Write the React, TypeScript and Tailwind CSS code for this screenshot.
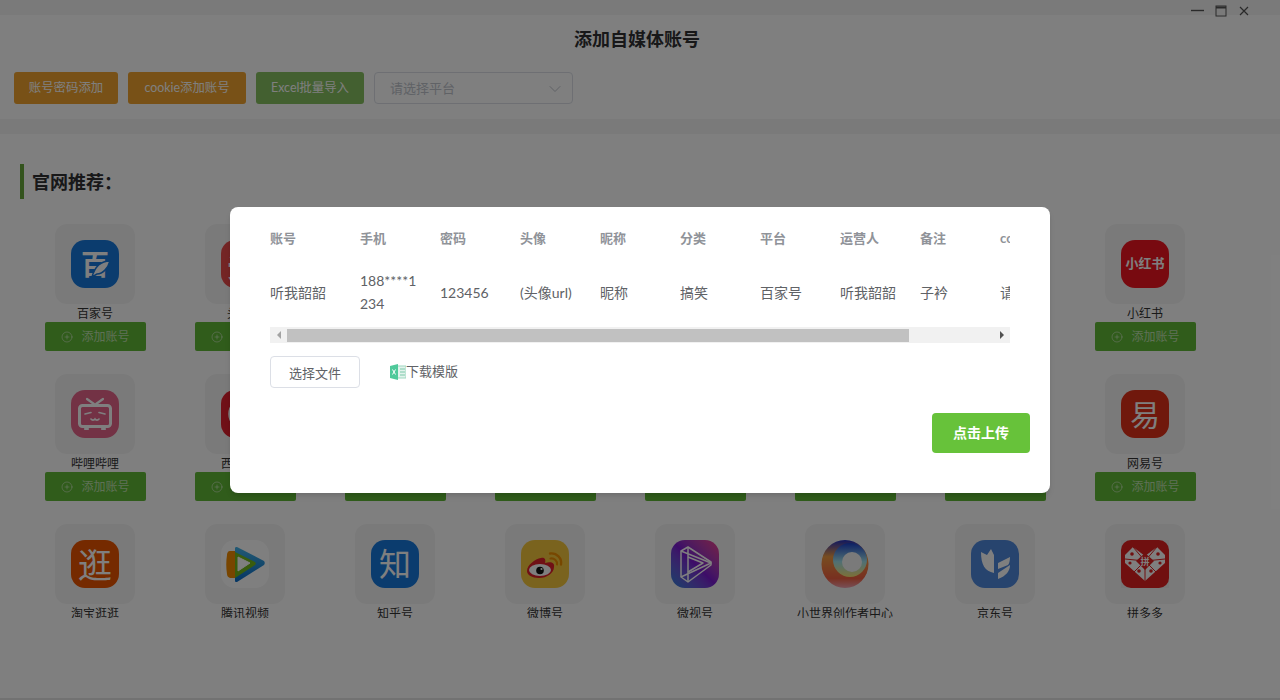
import { ChevronDown, CirclePlus } from 'lucide-react';
import type { ReactNode } from 'react';

const font = "[font-family:'Lato','Noto_Sans_CJK_SC',sans-serif]";

function LetterLogo({ bg, text, size }: { bg: string; text: string; size: string }) {
  return (
    <div className={`w-12 h-12 rounded-[14px] flex items-center justify-center text-white ${bg} ${size}`}>
      {text}
    </div>
  );
}

function Baijia() {
  return (
    <div className="relative w-12 h-12 rounded-[14px] bg-[#1678dc] flex items-center justify-center text-white text-[28px] font-bold">
      百
      <svg width="48" height="48" viewBox="0 0 48 48" className="absolute inset-0">
        <path d="M39 21C31 21 24 26 21 37l5-3c6 0 11-6 13-13z" fill="#fff" stroke="#1678dc" strokeWidth="1.5" />
      </svg>
    </div>
  );
}

function Xigua() {
  return (
    <div className="w-12 h-12 rounded-[14px] bg-[#e0202e]">
      <svg width="48" height="48" viewBox="0 0 48 48" fill="none">
        <circle cx="24" cy="24" r="15" stroke="#fff" strokeWidth="3.5" />
      </svg>
    </div>
  );
}

function Bilibili() {
  return (
    <div className="w-12 h-12 rounded-[14px] bg-[#e6648a]">
      <svg width="48" height="48" viewBox="0 0 48 48" fill="none" stroke="#fff" strokeLinecap="round">
        <path d="M16 9l7 5M32 9l-7 5" strokeWidth="2.2" />
        <rect x="8.5" y="15.5" width="31" height="21" rx="3" strokeWidth="3" />
        <path d="M14 24l6-1.5M28 22.5l6 1.5M20 29c1 1.5 3 1.5 4 0 1 1.5 3 1.5 4 0" strokeWidth="1.6" />
        <path d="M14 39h3M31 39h3" strokeWidth="2.2" />
      </svg>
    </div>
  );
}

function TencentVideo() {
  return (
    <div className="w-12 h-12 rounded-[14px] bg-white">
      <svg width="48" height="48" viewBox="0 0 48 48">
        <defs>
          <linearGradient id="txBlue" x1="0" y1="0" x2="0" y2="1">
            <stop offset="0" stopColor="#45b4e8" />
            <stop offset="1" stopColor="#0a6cc8" />
          </linearGradient>
        </defs>
        <path d="M9 11h6v27H9c-2-1-3-2-3-4-1-6-1-13 0-19 0-2 1-4 3-4z" fill="#f08a00" />
        <path d="M14 8c0-1 1-1 2-1l27 14c1 1 1 3 0 4L16 42c-1 0-2 0-2-1z" fill="url(#txBlue)" />
        <path d="M14 12l20 10c1 1 1 2 0 3L14 38z" fill="#72b81c" />
        <path d="M17 17l12 6-12 8z" fill="#fff" stroke="#fff" strokeLinejoin="round" />
      </svg>
    </div>
  );
}

function Weibo() {
  return (
    <div className="w-12 h-12 rounded-[14px] bg-[#f5c73d]">
      <svg width="48" height="48" viewBox="0 0 48 48" fill="none">
        <path d="M6 31c0-6 8-12 14-13 4-1 5 2 4 5 6-2 10 0 9 4 0 6-7 11-15 11-7 0-12-3-12-7z" fill="#e0202a" />
        <ellipse cx="19" cy="30" rx="11" ry="6" fill="#fff" />
        <circle cx="19" cy="30.5" r="3.8" fill="#111" />
        <circle cx="20.5" cy="29" r="1.1" fill="#fff" />
        <path d="M29 13.5c7-1 12 5 11 11" stroke="#ef8f00" strokeWidth="2.4" strokeLinecap="round" />
        <path d="M29.500 18.500c4-.5 7 2.500 6.500 6" stroke="#ef8f00" strokeWidth="2.2" strokeLinecap="round" />
      </svg>
    </div>
  );
}

function Weishi() {
  return (
    <div className="w-12 h-12 rounded-[14px] bg-gradient-to-tr from-[#1680d8] via-[#7a18d0] to-[#f03a8a]">
      <svg width="48" height="48" viewBox="0 0 48 48" fill="none" stroke="#fff" strokeWidth="1.5" strokeLinejoin="round">
        <path d="M10 11l7-4 23 15v3L17 42l-7-5z" />
        <path d="M17 7v35M10 11l30 12L10 37" />
        <path d="M17 17l15 6-15 9" />
      </svg>
    </div>
  );
}

function SmallWorld() {
  return (
    <svg width="48" height="48" viewBox="0 0 48 48">
      <defs>
        <linearGradient id="swOuter" x1="0" y1="0" x2="0" y2="1">
          <stop offset="0" stopColor="#2030c0" />
          <stop offset="0.35" stopColor="#f09a40" />
          <stop offset="0.8" stopColor="#f06040" />
          <stop offset="1" stopColor="#f0a0b0" />
        </linearGradient>
        <linearGradient id="swInner" x1="0" y1="0" x2="0" y2="1">
          <stop offset="0" stopColor="#1a40c8" />
          <stop offset="0.55" stopColor="#a0e0e8" />
          <stop offset="1" stopColor="#f8e070" />
        </linearGradient>
      </defs>
      <ellipse cx="24" cy="24" rx="23.500" ry="24" fill="url(#swOuter)" />
      <circle cx="29" cy="20" r="17" fill="url(#swInner)" />
      <circle cx="31" cy="22" r="10" fill="#f5f5f5" />
    </svg>
  );
}

function Jingdong() {
  return (
    <div className="w-12 h-12 rounded-[14px] bg-[#4f88dc]">
      <svg width="48" height="48" viewBox="0 0 48 48" fill="#fff">
        <path d="M10 12l6 3 4-6 3 6v18c-9-2-13-8-13-21z" />
        <path d="M27 23l12-6c0 4-1 7-2 8l-10 4zM27 33l12-8c0 6-4 11-12 14z" />
      </svg>
    </div>
  );
}

function Pinduoduo() {
  return (
    <div className="w-12 h-12 bg-[#ececec]">
      <div className="w-12 h-12 rounded-[10px] bg-[#e02020]">
        <svg width="48" height="48" viewBox="0 0 48 48">
          <path d="M12 7l12 9 12-9 8 8v8L24 41 4 23v-8z" fill="#fff" />
          <path d="M12 7l12 14M36 7L24 21M4 19l20 2M44 19l-20 2M12 33l12-12M36 33L24 21M24 41V21" stroke="#e02020" strokeWidth="1" />
          <path d="M24 13l9 8-9 9-9-9z" fill="#e02020" />
          <text x="24" y="25" textAnchor="middle" fontSize="9" fill="#fff" fontWeight="700">拼</text>
          <circle cx="11" cy="14" r="1.800" fill="#e02020" />
          <circle cx="37" cy="14" r="1.800" fill="#e02020" />
          <circle cx="9" cy="23" r="1.600" fill="#e02020" />
          <circle cx="39" cy="23" r="1.600" fill="#e02020" />
          <circle cx="18" cy="31" r="1.800" fill="#e02020" />
          <circle cx="30" cy="31" r="1.800" fill="#e02020" />
        </svg>
      </div>
    </div>
  );
}

type Tile = { name: string; logo: ReactNode; add?: boolean };

const tiles: Tile[] = [
  { name: '百家号', add: true, logo: <Baijia /> },
  { name: '头条号', add: true, logo: <LetterLogo bg="bg-[#e84a4a]" text="头" size="text-[36px] font-bold" /> },
  { name: '大鱼号', add: true, logo: <LetterLogo bg="bg-[#f08a00]" text="鱼" size="text-[30px] font-bold" /> },
  { name: '企鹅号', add: true, logo: <LetterLogo bg="bg-[#1678dc]" text="企" size="text-[30px] font-bold" /> },
  { name: '搜狐号', add: true, logo: <LetterLogo bg="bg-[#e6a23c]" text="搜" size="text-[30px] font-bold" /> },
  { name: '一点号', add: true, logo: <LetterLogo bg="bg-[#e84a4a]" text="点" size="text-[30px] font-bold" /> },
  { name: '抖音号', add: true, logo: <LetterLogo bg="bg-[#222222]" text="抖" size="text-[30px] font-bold" /> },
  { name: '小红书', add: true, logo: <LetterLogo bg="bg-[#f01420]" text="小红书" size="text-[13px] font-bold" /> },
  { name: '哔哩哔哩', add: true, logo: <Bilibili /> },
  { name: '西瓜视频', add: true, logo: <Xigua /> },
  { name: '快手号', add: true, logo: <LetterLogo bg="bg-[#f08a00]" text="快" size="text-[30px] font-bold" /> },
  { name: '趣头条', add: true, logo: <LetterLogo bg="bg-[#1ab060]" text="趣" size="text-[30px] font-bold" /> },
  { name: '简书', add: true, logo: <LetterLogo bg="bg-[#e8604a]" text="简" size="text-[30px] font-bold" /> },
  { name: '豆瓣', add: true, logo: <LetterLogo bg="bg-[#1ab060]" text="豆" size="text-[30px] font-bold" /> },
  { name: '美柚', add: true, logo: <LetterLogo bg="bg-[#f06a8a]" text="美" size="text-[30px] font-bold" /> },
  { name: '网易号', add: true, logo: <LetterLogo bg="bg-[#e03018]" text="易" size="text-[30px]" /> },
  { name: '淘宝逛逛', logo: <LetterLogo bg="bg-[#ea5400]" text="逛" size="text-[34px]" /> },
  { name: '腾讯视频', logo: <TencentVideo /> },
  { name: '知乎号', logo: <LetterLogo bg="bg-[#1678dc]" text="知" size="text-[32px]" /> },
  { name: '微博号', logo: <Weibo /> },
  { name: '微视号', logo: <Weishi /> },
  { name: '小世界创作者中心', logo: <SmallWorld /> },
  { name: '京东号', logo: <Jingdong /> },
  { name: '拼多多', logo: <Pinduoduo /> },
];

const headers = ['账号', '手机', '密码', '头像', '昵称', '分类', '平台', '运营人', '备注', 'cookie'];
const cells = ['听我韶韶', '188****1234', '123456', '(头像url)', '昵称', '搞笑', '百家号', '听我韶韶', '子衿', '请输入cookie'];

function Column({ text, index }: { text: string; index: number }) {
  if (index === 9) return <div className="shrink-0 w-[120px] whitespace-nowrap">{text}</div>;
  return <div className={`shrink-0 pr-5 break-all ${index === 0 ? 'w-[90px]' : 'w-[80px]'}`}>{text}</div>;
}

export default function App() {
  return (
    <div className={`relative h-[700px] overflow-hidden bg-white ${font}`}>
      <div className="h-[15px] bg-[#f5f5f5]" />
      <div className="h-[104px] bg-white rounded-md pt-3 px-[14px]">
        <h1 className="h-6 leading-6 text-center text-lg font-bold text-[#303133] pr-[6px]">添加自媒体账号</h1>
        <div className="flex gap-[10px] mt-[21px] text-[12.4px] text-white">
          <button className="w-[104px] h-8 pt-px rounded-[3px] bg-[#f0a32e]">账号密码添加</button>
          <button className="w-[118px] h-8 pt-px rounded-[3px] bg-[#f0a32e]">cookie添加账号</button>
          <button className="w-[108px] h-8 pt-px rounded-[3px] bg-[#86c060]">Excel批量导入</button>
          <div className="w-[199px] h-8 pt-px rounded border border-[#dcdfe6] flex items-center justify-between pl-[15px] pr-[7px] text-[13px] text-[#c0c4cc]">
            <span>请选择平台</span>
            <ChevronDown size={20} strokeWidth={1.2} />
          </div>
        </div>
      </div>
      <div className="h-[15px] bg-[#f5f5f5]" />

      <div className="pl-5 pt-[30px]">
        <div className="h-[35px] border-l-4 border-[#67a63a] pl-2 flex items-center text-lg font-bold text-[#303133]">官网推荐：</div>
        <div className="grid grid-cols-[repeat(8,150px)] auto-rows-[150px] mt-[25px]">
          {tiles.map((t) => (
            <div key={t.name} className="flex flex-col items-center">
              <div className="w-20 h-20 rounded-xl bg-[#f5f5f5] flex items-center justify-center">{t.logo}</div>
              <div className={`leading-[20px] text-xs text-[#333333] whitespace-nowrap ${t.add ? 'h-[18px]' : 'h-[14px] overflow-hidden'}`}>{t.name}</div>
              {t.add && (
                <button className="w-[101px] h-[29px] ml-px rounded-[2px] bg-[#60b836] text-white/60 text-xs flex items-center justify-center gap-2">
                  <CirclePlus size={12} strokeWidth={1.5} />
                  添加账号
                </button>
              )}
            </div>
          ))}
        </div>
      </div>

      <div className="absolute bottom-0 inset-x-0 h-[2px] bg-[#e4e4e4]" />

      <div className="absolute top-[5px] right-[31px] flex items-center gap-[11px] text-[#555555]">
        <svg width="13" height="12" viewBox="0 0 13 12" stroke="currentColor" fill="none"><path d="M0 5.500h13" strokeWidth="1.4" /></svg>
        <svg width="12" height="12" viewBox="0 0 12 12" stroke="currentColor" fill="none"><rect x="1" y="1" width="10" height="10" /><path d="M1 2.500h10" strokeWidth="2" /></svg>
        <svg width="10" height="10" viewBox="0 0 10 10" stroke="currentColor" fill="none" className="ml-px"><path d="M1 1l8 8M9 1l-8 8" strokeWidth="1.2" /></svg>
      </div>

      <div className="absolute inset-0 bg-black/50" />

      <div className="absolute left-[230px] top-[207px] w-[820px] h-[286px] bg-white rounded-lg px-10 shadow-md">
        <div className="overflow-hidden mt-[14px] h-[106px]">
          <div className="flex h-9 items-center text-[13px] font-bold text-[#909399] w-[1000px]">
            {headers.map((h, i) => <Column key={h} text={h} index={i} />)}
          </div>
          <div className="flex h-[70px] items-center text-sm leading-[23px] text-[#606266] w-[1000px]">
            {cells.map((c, i) => <Column key={i} text={c} index={i} />)}
          </div>
        </div>
        <div className="h-4 bg-[#f1f1f1] flex items-center justify-between">
          <div className="flex items-center h-full">
            <div className="w-[17px] flex justify-center">
              <span className="w-0 h-0 border-y-[4px] border-y-transparent border-r-[4px] border-r-[#a3a3a3]" />
            </div>
            <div className="w-[622px] h-[13px] bg-[#c1c1c1]" />
          </div>
          <div className="w-[17px] flex justify-center">
            <span className="w-0 h-0 border-y-[4px] border-y-transparent border-l-[4px] border-l-[#505050]" />
          </div>
        </div>
        <div className="flex items-center mt-[13px] h-8">
          <button className="w-[90px] h-8 pt-[3px] rounded border border-[#dcdfe6] text-[13px] text-[#606266]">选择文件</button>
          <svg width="16" height="16" viewBox="0 0 16 16" className="ml-[30px]">
            <rect x="5" y="2" width="11" height="12" fill="#e2f3ec" stroke="#9fd8c1" />
            <path d="M10 5h5M10 8h5M10 11h5" stroke="#7cc8aa" />
            <path d="M0 2l8-2v16l-8-2z" fill="#4fc99a" />
            <path d="M2.500 5.500l3 5M5.500 5.500l-3 5" stroke="#fff" strokeWidth="1" />
          </svg>
          <span className="text-[13px] text-[#606266]">下载模版</span>
        </div>
        <div className="flex justify-end -mr-5 mt-[25px]">
          <button className="w-[98px] h-10 rounded bg-[#67c23a] text-white text-sm font-bold">点击上传</button>
        </div>
      </div>
    </div>
  );
}
